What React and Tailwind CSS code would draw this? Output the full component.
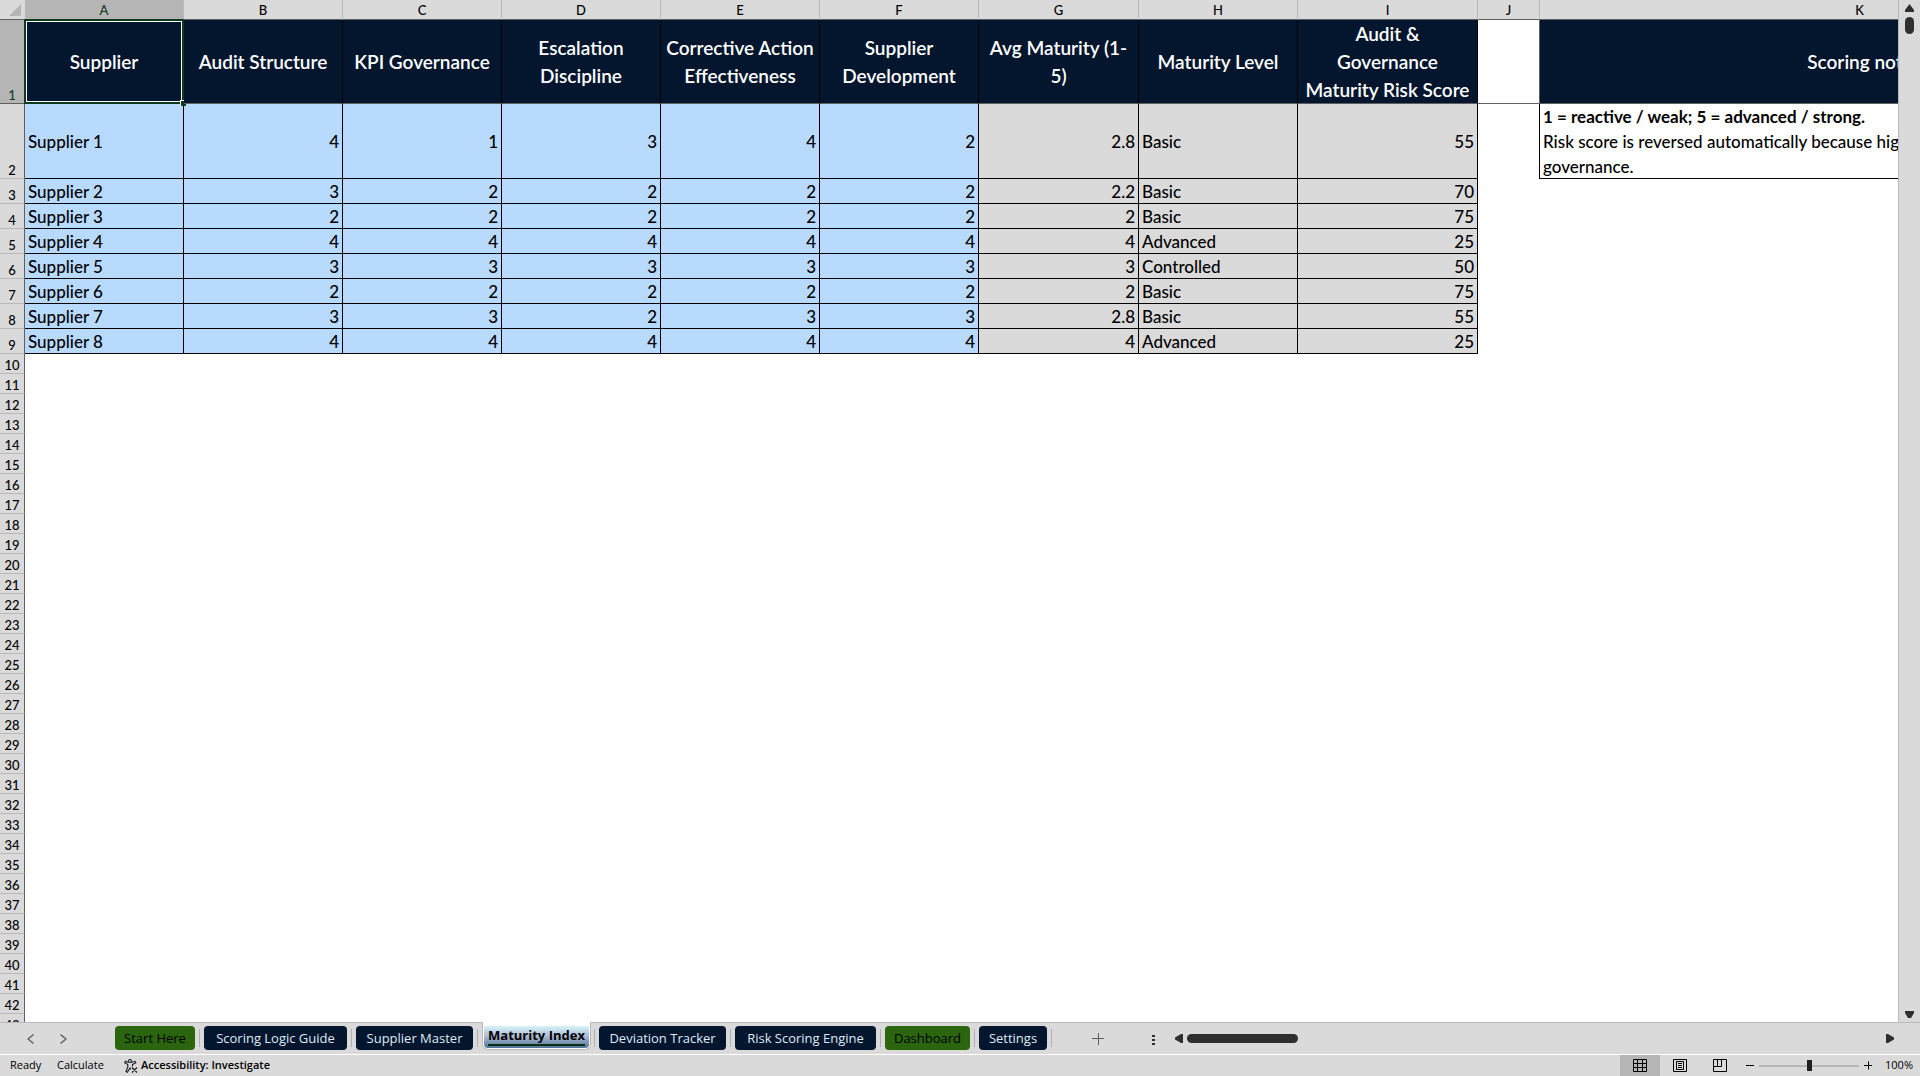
import { useState } from 'react';

const columns = ['A', 'B', 'C', 'D', 'E', 'F', 'G', 'H', 'I', 'J', 'K'];

const headings = [
  'Supplier',
  'Audit Structure',
  'KPI Governance',
  'Escalation\nDiscipline',
  'Corrective Action\nEffectiveness',
  'Supplier\nDevelopment',
  'Avg Maturity (1-\n5)',
  'Maturity Level',
  'Audit &\nGovernance\nMaturity Risk Score',
];

const suppliers = [
  { name: 'Supplier 1', scores: [4, 1, 3, 4, 2], avg: 2.8, level: 'Basic', risk: 55 },
  { name: 'Supplier 2', scores: [3, 2, 2, 2, 2], avg: 2.2, level: 'Basic', risk: 70 },
  { name: 'Supplier 3', scores: [2, 2, 2, 2, 2], avg: 2, level: 'Basic', risk: 75 },
  { name: 'Supplier 4', scores: [4, 4, 4, 4, 4], avg: 4, level: 'Advanced', risk: 25 },
  { name: 'Supplier 5', scores: [3, 3, 3, 3, 3], avg: 3, level: 'Controlled', risk: 50 },
  { name: 'Supplier 6', scores: [2, 2, 2, 2, 2], avg: 2, level: 'Basic', risk: 75 },
  { name: 'Supplier 7', scores: [3, 3, 2, 3, 3], avg: 2.8, level: 'Basic', risk: 55 },
  { name: 'Supplier 8', scores: [4, 4, 4, 4, 4], avg: 4, level: 'Advanced', risk: 25 },
];

const emptyRows = Array.from({ length: 34 }, (_, i) => i + 10);

const tabs = [
  { name: 'Start Here', width: 'w-20', color: 'bg-[#2b660e] text-black' },
  { name: 'Scoring Logic Guide', width: 'w-[143px]', color: 'bg-[#03162e] text-[#dfeaf5]' },
  { name: 'Supplier Master', width: 'w-[117px]', color: 'bg-[#03162e] text-[#dfeaf5]' },
  { name: 'Maturity Index', width: 'w-[109px]', color: 'bg-[#03162e] text-[#dfeaf5]' },
  { name: 'Deviation Tracker', width: 'w-[127px]', color: 'bg-[#03162e] text-[#dfeaf5]' },
  { name: 'Risk Scoring Engine', width: 'w-[141px]', color: 'bg-[#03162e] text-[#dfeaf5]' },
  { name: 'Dashboard', width: 'w-[85px]', color: 'bg-[#2b660e] font-medium text-black' },
  { name: 'Settings', width: 'w-[68px]', color: 'bg-[#03162e] text-[#dfeaf5]' },
];

const RowNumber = ({ children, active }) => {
  return (
    <th
      scope="row"
      className={`border-r border-b border-r-[#5f5f5f] p-0 align-bottom text-[13px] leading-4 font-medium ${
        active ? 'border-b-[#5f5f5f] bg-[#b5b5b5] text-[#0d3a1c]' : 'border-b-[#b9b9b9] bg-[#dadada]'
      }`}
    >
      {children}
    </th>
  );
};

const Cell = ({ children, className }) => {
  return (
    <td className={`border-r border-b border-black px-[3px] pt-[2px] pb-0 leading-[22px] ${className}`}>
      {children}
    </td>
  );
};

const Sheet = () => {
  return (
    <table className="w-[1980px] table-fixed border-separate border-spacing-0 text-[17px] font-medium text-black">
      <colgroup>
        <col className="w-[25px]" />
        <col className="w-[159px]" />
        <col className="w-[159px]" />
        <col className="w-[159px]" />
        <col className="w-[159px]" />
        <col className="w-[159px]" />
        <col className="w-[159px]" />
        <col className="w-[160px]" />
        <col className="w-[159px]" />
        <col className="w-[180px]" />
        <col className="w-[62px]" />
        <col className="w-[640px]" />
      </colgroup>
      <thead>
        <tr className="h-5 bg-[#dadada] text-[13px] leading-[17px]">
          <td className="border-b border-[#5f5f5f] p-0">
            <svg className="ml-auto mr-1 size-3" viewBox="0 0 12 12">
              <path d="M12 0v12H0z" fill="#b5b5b5" />
            </svg>
          </td>
          {columns.map((column) => (
            <th
              key={column}
              scope="col"
              className={`border-r border-b border-r-[#b9b9b9] border-b-[#5f5f5f] px-0 pt-[2px] pb-0 font-medium ${
                column === 'A' ? 'bg-[#b5b5b5] text-[#0d3a1c]' : ''
              }`}
            >
              {column}
            </th>
          ))}
        </tr>
      </thead>
      <tbody>
        <tr className="h-[84px]">
          <RowNumber active>1</RowNumber>
          {headings.map((heading, index) => (
            <th
              key={heading}
              className="relative border-r border-b border-r-black border-b-[#5f5f5f] bg-[#03162e] p-0 text-[19px] leading-7 font-semibold whitespace-pre-line text-white"
            >
              <div className="-mb-px">{heading}</div>
              {index === 0 && (
                <span className="absolute -inset-px border-2 border-[#0d3a1c] outline-1 -outline-offset-3 outline-white">
                  <span className="absolute -right-1 -bottom-1 size-[6px] border-t border-l border-white bg-[#0d3a1c]" />
                </span>
              )}
            </th>
          ))}
          <td className="border-r border-b border-[#5f5f5f]" />
          <th className="border-b border-[#5f5f5f] bg-[#03162e] p-0 text-[19px] leading-7 font-semibold text-white">
            Scoring note
          </th>
        </tr>
        {suppliers.map((supplier, index) => (
          <tr key={supplier.name} className={index === 0 ? 'h-[75px]' : 'h-[25px]'}>
            <RowNumber>{index + 2}</RowNumber>
            <Cell className="bg-[#b8daff]">{supplier.name}</Cell>
            {supplier.scores.map((score, i) => (
              <Cell key={i} className="bg-[#b8daff] text-right">
                {score}
              </Cell>
            ))}
            <Cell className="bg-[#dadada] text-right">{supplier.avg}</Cell>
            <Cell className="bg-[#dadada]">{supplier.level}</Cell>
            <Cell className="bg-[#dadada] text-right">{supplier.risk}</Cell>
            {index === 0 && (
              <>
                <td className="border-r border-black" />
                <td className="border-b border-black px-[3px] py-0 leading-[25px]">
                  <div className="-mb-px">
                    <b>1 = reactive / weak; 5 = advanced / strong.</b>
                    <br />
                    <span className="whitespace-nowrap">
                      Risk score is reversed automatically because higher maturity means stronger
                    </span>
                    <br />
                    governance.
                  </div>
                </td>
              </>
            )}
          </tr>
        ))}
        {emptyRows.map((row) => (
          <tr key={row} className="h-5">
            <RowNumber>{row}</RowNumber>
          </tr>
        ))}
      </tbody>
    </table>
  );
};

const VerticalScroll = () => {
  return (
    <div className="flex w-[22px] shrink-0 flex-col items-center border-l border-[#b9b9b9] bg-[#dadada] pt-1 pb-[3px]">
      <button aria-label="Scroll up">
        <svg className="h-2 w-[9px]" viewBox="0 0 9 8">
          <path d="M4.5 0 9 6v2H0V6z" fill="#2f2f2f" />
        </svg>
      </button>
      <div className="mt-[5px] h-[17px] w-[9px] rounded-full bg-[#2f2f2f]" />
      <button aria-label="Scroll down" className="mt-auto">
        <svg className="h-2 w-[9px]" viewBox="0 0 9 8">
          <path d="M0 0h9v2L6 7H3L0 2z" fill="#2f2f2f" />
        </svg>
      </button>
    </div>
  );
};

const Separator = () => {
  return <span className="mx-1 mt-[3px] h-[18px] w-px shrink-0 bg-[#b0b0b0]" />;
};

const TabBar = ({ active, onSelect }) => {
  return (
    <div className="flex h-8 shrink-0 items-start bg-[#dadada] text-[13px]">
      <div className="flex h-8 w-[115px] shrink-0 items-center border-t border-[#b9b9b9] pl-[27px]">
        <button aria-label="Previous sheet" className="mr-[26px]">
          <svg className="h-[10px] w-[7px]" viewBox="0 0 7 10" fill="none" stroke="#5f5f5f" strokeWidth="1.4">
            <path d="M6.5 .5 1 5l5.5 4.5" />
          </svg>
        </button>
        <button aria-label="Next sheet">
          <svg className="h-[10px] w-[7px]" viewBox="0 0 7 10" fill="none" stroke="#5f5f5f" strokeWidth="1.4">
            <path d="M.5 .5 6 5 .5 9.5" />
          </svg>
        </button>
      </div>
      {tabs.map((tab) =>
        tab.name === active ? (
          <div key={tab.name} className="flex h-8 shrink-0 items-start">
            <button
              className={`h-7 rounded-b-md border border-t-0 border-[#b9b9b9] bg-white px-px pt-1 pb-px font-bold ${tab.width}`}
            >
              <span className="flex h-full items-start justify-center rounded-b bg-linear-to-b from-[#d8f5fb] via-[#a9b6cf] to-[#4f7396] leading-[18px] whitespace-nowrap">
                <span className="border-b-2 border-[#0a3013]">{tab.name}</span>
              </span>
            </button>
            <span className="h-8 w-2 border-t border-[#b9b9b9] pt-[6px] pl-[3px]">
              <span className="block h-[18px] w-px bg-[#b0b0b0]" />
            </span>
          </div>
        ) : (
          <div key={tab.name} className="flex h-8 shrink-0 items-start border-t border-[#b9b9b9] pt-[3px]">
            <button onClick={() => onSelect(tab.name)} className={`h-6 rounded pt-px ${tab.width} ${tab.color}`}>
              {tab.name}
            </button>
            <Separator />
          </div>
        )
      )}
      <div className="flex h-8 flex-1 items-center border-t border-[#b9b9b9] pr-[26px]">
        <button aria-label="New sheet" className="ml-9">
          <svg className="size-3" viewBox="0 0 12 12" stroke="#5f5f5f">
            <path d="M6.5 0v12M0 5.5h12" />
          </svg>
        </button>
        <svg className="mt-1 ml-12 h-[11px] w-[3px]" viewBox="0 0 3 11">
          <path d="M0 0h3v2H0zM0 4h3v2H0zM0 8h3v2H0z" fill="#2f2f2f" />
        </svg>
        <button aria-label="Scroll left" className="ml-5">
          <svg className="h-[9px] w-2" viewBox="0 0 8 9">
            <path d="M8 0v9H6L0 5.5v-2L6 0z" fill="#2f2f2f" />
          </svg>
        </button>
        <div className="ml-1 h-[9px] w-[111px] rounded-full bg-[#2f2f2f]" />
        <button aria-label="Scroll right" className="ml-auto">
          <svg className="h-[9px] w-2" viewBox="0 0 8 9">
            <path d="M0 0h2l6 3.5v2L2 9H0z" fill="#2f2f2f" />
          </svg>
        </button>
      </div>
    </div>
  );
};

const StatusBar = ({ zoom, onZoom }) => {
  return (
    <div className="flex h-[22px] shrink-0 items-center border-t border-white bg-[#dadada] pl-[10px] text-[11px]">
      <span className="w-[47px]">Ready</span>
      <span className="w-[67px]">Calculate</span>
      <button className="flex items-center gap-[3px] font-semibold">
        <svg className="size-[14px]" viewBox="0 0 14 14" fill="none" stroke="#1a1a1a" strokeWidth="1.1">
          <circle cx="6" cy="2" r="1.5" />
          <path d="M4.5 3.5 1.5 2.3.7 3.8 3.8 5.5V8L2 12.5l1.3.8L6 9l1 1.5M7.5 3.5l3.5-1.2.8 1.5-3.3 1.7v2M8 8.5l5 5M13 8.5l-5 5" />
        </svg>
        Accessibility: Investigate
      </button>
      <button aria-label="Normal view" className="ml-auto flex h-full w-10 items-center justify-center bg-[#b5b5b5]">
        <svg className="size-[14px]" viewBox="0 0 14 14" fill="none" stroke="#000">
          <path d="M.5 .5h13v12H.5zM4.5 .5v12M9.5 .5v12M.5 4.5h13M.5 8.5h13" />
        </svg>
      </button>
      <button aria-label="Page layout" className="flex h-full w-10 items-center justify-center">
        <svg className="size-[14px]" viewBox="0 0 14 14" fill="none" stroke="#000">
          <path d="M.5 .5h13v12H.5zM3.5 2.5h7v8h-7zM5 4.5h4M5 6.5h4M5 8.5h4" />
        </svg>
      </button>
      <button aria-label="Page break preview" className="flex h-full w-10 items-center justify-center">
        <svg className="size-[14px]" viewBox="0 0 14 14" fill="none" stroke="#000">
          <path d="M.5 .5h13v12H.5zM4.5 .5v7M.5 7.5h8v-7" />
        </svg>
      </button>
      <button aria-label="Zoom out" className="ml-[6px]">
        <svg className="h-3 w-2" viewBox="0 0 8 12" stroke="#000">
          <path d="M0 5.5h8" />
        </svg>
      </button>
      <input
        type="range"
        aria-label="Zoom"
        min="10"
        max="190"
        value={zoom}
        onChange={(e) => onZoom(Number(e.target.value))}
        className="mx-[5px] h-3 w-[100px] appearance-none bg-linear-to-b from-transparent from-45% via-black via-50% to-transparent to-55% [&::-webkit-slider-thumb]:h-[11px] [&::-webkit-slider-thumb]:w-[5px] [&::-webkit-slider-thumb]:appearance-none [&::-webkit-slider-thumb]:bg-[#1f1f1f]"
      />
      <button aria-label="Zoom in">
        <svg className="h-3 w-2" viewBox="0 0 8 12" stroke="#000">
          <path d="M0 5.5h8M4.5 1.5v8" />
        </svg>
      </button>
      <span className="ml-[13px] w-[35px]">{zoom}%</span>
    </div>
  );
};

export default function App() {
  const [activeTab, setActiveTab] = useState('Maturity Index');
  const [zoom, setZoom] = useState(100);

  return (
    <div className="flex h-screen flex-col overflow-hidden bg-white font-['Open_Sans',sans-serif] text-black">
      <div className="flex min-h-0 flex-1">
        <div className="min-w-0 flex-1 overflow-hidden font-[Lato,sans-serif]">
          <Sheet />
        </div>
        <VerticalScroll />
      </div>
      <TabBar active={activeTab} onSelect={setActiveTab} />
      <StatusBar zoom={zoom} onZoom={setZoom} />
    </div>
  );
}
